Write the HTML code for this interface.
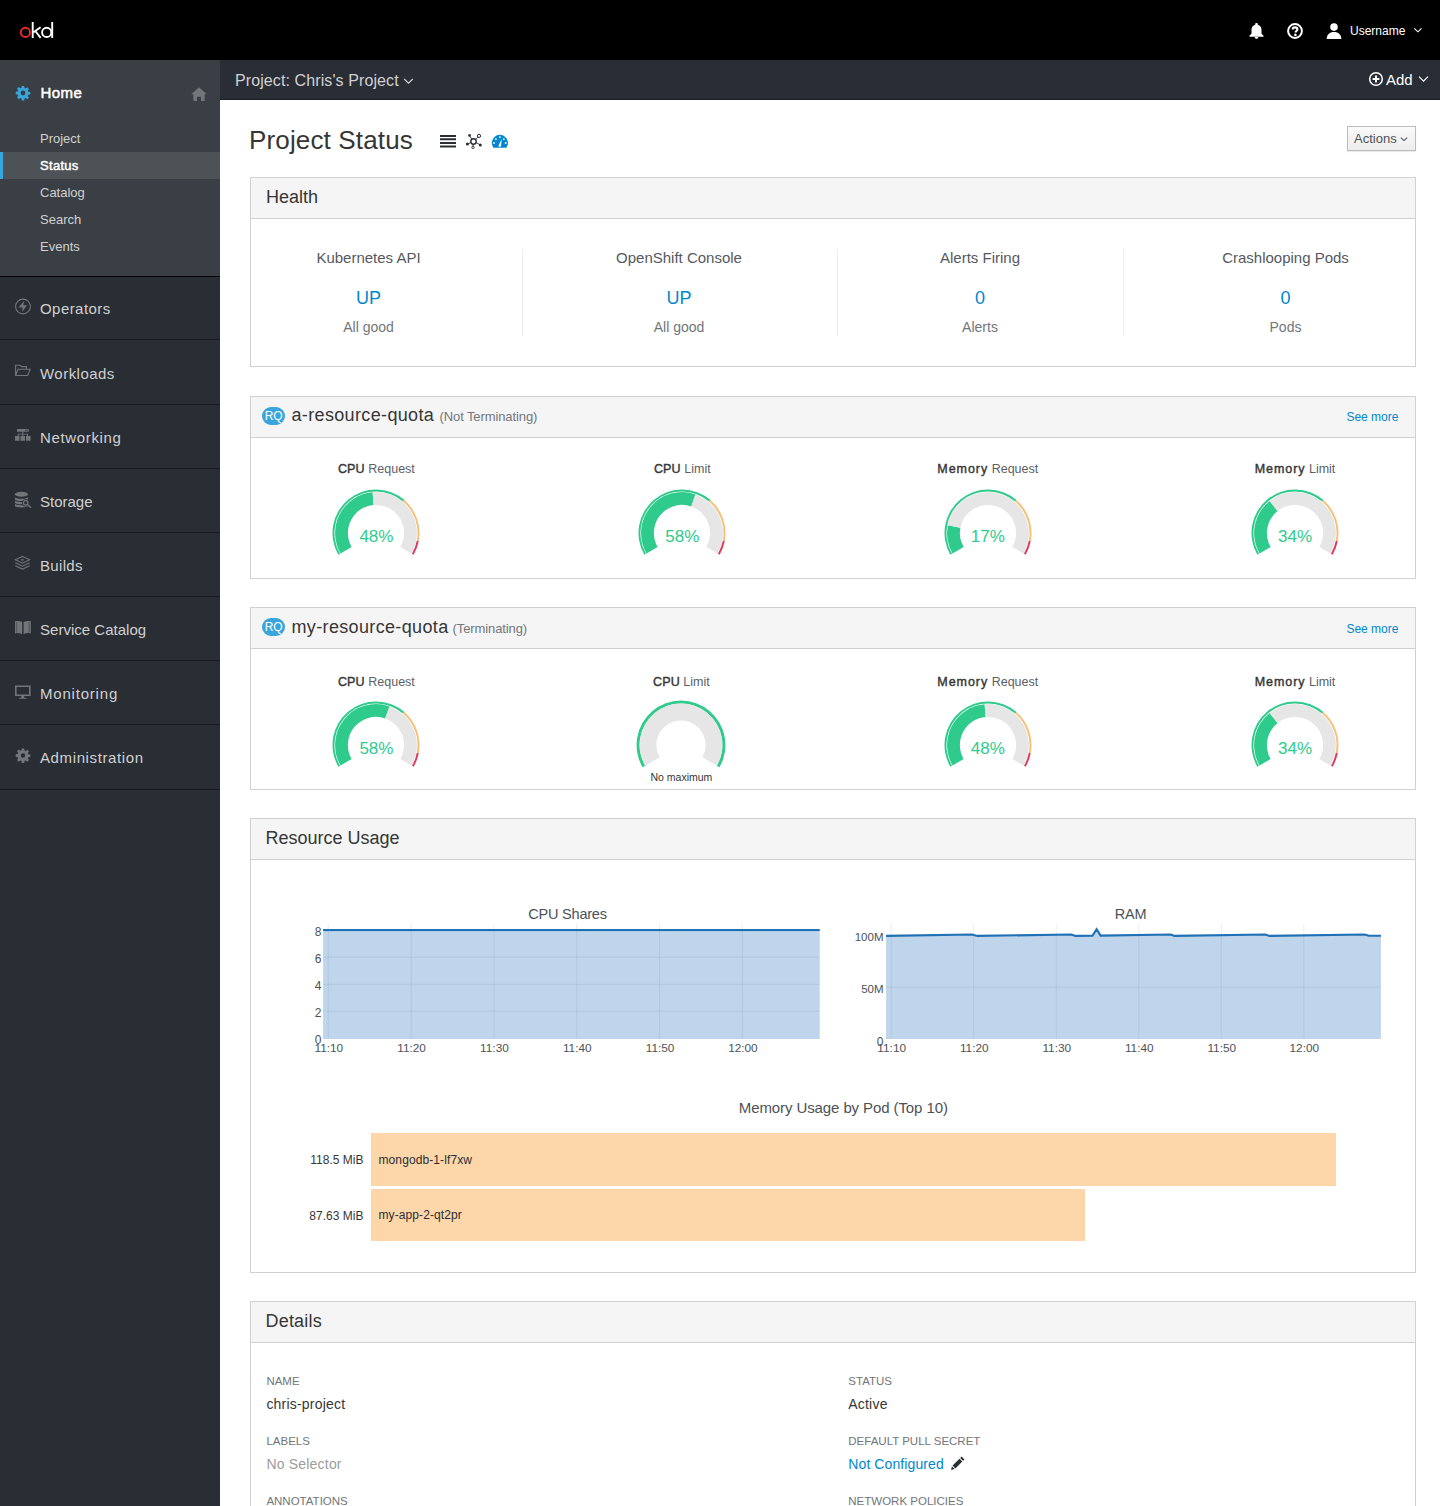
<!DOCTYPE html>
<html><head><meta charset="utf-8">
<style>
*{box-sizing:border-box}
html,body{margin:0;padding:0}
body{width:1440px;height:1506px;overflow:hidden;position:relative;background:#fff;font-family:"Liberation Sans",sans-serif;color:#363636}
.a{position:absolute}
.t{position:absolute;white-space:nowrap;line-height:1}
.c{position:absolute;white-space:nowrap;line-height:1;width:400px;text-align:center}
#mast{left:0;top:0;width:1440px;height:60px;background:#000}
#side{left:0;top:60px;width:220px;height:1446px;background:#292d34}
#homesec{left:0;top:60px;width:220px;height:216px;background:#393f44}
.sep{position:absolute;left:0;width:220px;height:1px;background:#17191d}
.sub{font-size:13px;color:#d1d1d1;left:40px}
.prim{font-size:15px;color:#d1d1d1;left:40px;letter-spacing:.3px}
#pbar{left:220px;top:60px;width:1220px;height:40px;background:#292d35}
.card{position:absolute;left:250px;width:1166px;border:1px solid #d1d1d1;background:#fff}
.card .hd{position:absolute;left:0;top:0;right:0;height:41px;background:#f5f5f5;border-bottom:1px solid #d1d1d1}
.h2{font-size:18px;color:#363636}
.link{color:#0088ce}
.gray{color:#72767b}
</style></head>
<body>
<!-- masthead -->
<div id="mast" class="a"></div>
<svg class="a" style="left:18px;top:20px" width="40" height="22" viewBox="18 20 40 22">
  <circle cx="25.4" cy="32.4" r="4.6" fill="none" stroke="#ee2a2a" stroke-width="1.9"/>
  <path d="M32.7 22v16M40.6 27.2l-7.1 5M35.3 31l5.3 6.8" fill="none" stroke="#fff" stroke-width="1.9"/>
  <circle cx="46.7" cy="32.4" r="4.6" fill="none" stroke="#fff" stroke-width="1.9"/>
  <path d="M52.2 22v16" fill="none" stroke="#fff" stroke-width="1.9"/>
</svg>

<!-- masthead right -->
<svg class="a" style="left:1247px;top:21px" width="20" height="20" viewBox="0 0 20 20">
  <path d="M9.5 2c.8 0 1.3.5 1.3 1.1v.6c2.3.6 3.7 2.6 3.7 5.1v3.2c0 1 .8 1.8 2 2.6v1.1H2.5v-1.1c1.2-.8 2-1.6 2-2.6V8.8c0-2.5 1.4-4.5 3.7-5.1v-.6C8.2 2.5 8.7 2 9.5 2zM7.7 15.9h3.6v.4c0 .9-.8 1.5-1.8 1.5s-1.8-.6-1.8-1.5z" fill="#fff"/>
</svg>
<svg class="a" style="left:1285px;top:21px" width="20" height="20" viewBox="0 0 20 20">
  <circle cx="10" cy="10" r="6.9" fill="none" stroke="#fff" stroke-width="2"/>
  <path d="M7.7 8.5c0-1.3 1-2.1 2.3-2.1s2.4.8 2.4 2c0 1.5-1.9 1.6-1.9 3" fill="none" stroke="#fff" stroke-width="2.1"/>
  <circle cx="10.4" cy="13.9" r="1.3" fill="#fff"/>
</svg>
<svg class="a" style="left:1325px;top:21px" width="18" height="20" viewBox="0 0 18 20">
  <circle cx="9" cy="6.1" r="3.8" fill="#fff"/>
  <path d="M1.6 18c.2-4.2 3-6.9 7.4-6.9s7.2 2.7 7.4 6.9z" fill="#fff"/>
</svg>
<div class="t" style="left:1350px;top:24.5px;font-size:12px;color:#fff">Username</div>
<svg class="a" style="left:1412px;top:26px" width="12" height="9" viewBox="0 0 12 9">
  <path d="M2.3 2.4l3.6 3.4l3.6-3.4" fill="none" stroke="#fff" stroke-width="1.1"/>
</svg>

<!-- sidebar -->
<div id="side" class="a"></div>
<div id="homesec" class="a"></div>
<div class="a" style="left:0;top:152px;width:220px;height:27px;background:#4d5256"></div>
<div class="a" style="left:0;top:152px;width:3px;height:27px;background:#39a5dc"></div>
<svg class="a" style="left:15px;top:85px" width="16" height="16" viewBox="0 0 16 16">
  <path fill="#39a5dc" d="M6.8 1h2.4l.3 2 1.2.5 1.6-1.2 1.7 1.7-1.2 1.6.5 1.2 2 .3v2.4l-2 .3-.5 1.2 1.2 1.6-1.7 1.7-1.6-1.2-1.2.5-.3 2H6.8l-.3-2-1.2-.5-1.6 1.2L2 12.3l1.2-1.6-.5-1.2-2-.3V6.8l2-.3.5-1.2L2 3.7 3.7 2l1.6 1.2 1.2-.5zM8 5.6A2.4 2.4 0 1 0 8 10.4 2.4 2.4 0 1 0 8 5.6z"/>
</svg>
<div class="t" style="left:40.5px;top:84.5px;font-size:15px;color:#fff;-webkit-text-stroke:.5px #fff;letter-spacing:.45px">Home</div>
<svg class="a" style="left:190px;top:86px" width="18" height="16" viewBox="0 0 18 16">
  <path fill="#72767b" d="M9 1.2l7.9 7H14.6V15H11V10.8H7V15H3.4V8.2H1.1z"/>
</svg>
<div class="t sub" style="top:132px">Project</div>
<div class="t sub" style="top:159px;color:#fff;-webkit-text-stroke:.45px #fff;letter-spacing:.3px">Status</div>
<div class="t sub" style="top:186px">Catalog</div>
<div class="t sub" style="top:213px">Search</div>
<div class="t sub" style="top:240px">Events</div>
<div class="sep" style="top:276px;background:#030303"></div>
<div class="sep" style="top:339px"></div>
<div class="sep" style="top:404px"></div>
<div class="sep" style="top:468px"></div>
<div class="sep" style="top:532px"></div>
<div class="sep" style="top:596px"></div>
<div class="sep" style="top:660px"></div>
<div class="sep" style="top:724px"></div>
<div class="sep" style="top:789px"></div>
<div class="t prim" style="top:301px;letter-spacing:0.44px">Operators</div>
<div class="t prim" style="top:366px;letter-spacing:0.47px">Workloads</div>
<div class="t prim" style="top:430px;letter-spacing:0.65px">Networking</div>
<div class="t prim" style="top:494px;letter-spacing:0px">Storage</div>
<div class="t prim" style="top:558px;letter-spacing:0.32px">Builds</div>
<div class="t prim" style="top:622px;letter-spacing:0.02px">Service Catalog</div>
<div class="t prim" style="top:686px;letter-spacing:0.8px">Monitoring</div>
<div class="t prim" style="top:750px;letter-spacing:0.62px">Administration</div>
<!-- sidebar icons -->
<svg class="a" style="left:14px;top:298px" width="18" height="18" viewBox="0 0 18 18">
  <circle cx="9" cy="8.5" r="7.4" fill="none" stroke="#72767b" stroke-width="1.1"/>
  <path fill="#72767b" d="M10.1 3.1L4.4 9.6H8.6L8.2 13.9L13 7.3H9.3z"/>
</svg>
<svg class="a" style="left:14px;top:362px" width="18" height="18" viewBox="0 0 18 18">
  <path fill="none" stroke="#72767b" stroke-width="1.1" d="M1.6 13.5V3.2h4.6l1.2 1.4h5.1v2.2M1.6 13.5l2.4-6.2h12.1l-2.4 6.2z"/>
</svg>
<svg class="a" style="left:14px;top:427px" width="18" height="18" viewBox="0 0 18 18">
  <path fill="#72767b" d="M2.9 2h11.8v2.7H2.9zM8.3 4.7h1v2H14v2.2h-1V7.6H9.3v1.3h-1V7.6H4.6v1.3h-1V6.7h4.7zM1 9h4.5v4.8H1zM6.5 9H11v4.8H6.5zM12 9h4.6v4.8H12z"/>
  <rect x="11.2" y="2.6" width="3" height="1.5" fill="#4a4e55"/>
</svg>
<svg class="a" style="left:14px;top:491px" width="18" height="18" viewBox="0 0 18 18">
  <g fill="#72767b"><ellipse cx="7.45" cy="3.35" rx="6.55" ry="2.5"/><path d="M0.9 6.0A6.55 1.7 0 0 0 14 6.0V8.2A6.55 1.7 0 0 1 0.9 8.2z"/><path d="M0.9 9.3A6.55 1.7 0 0 0 14 9.3V11.5A6.55 1.7 0 0 1 0.9 11.5z"/><path d="M0.9 12.6A6.55 1.7 0 0 0 14 12.6V14.8A6.55 1.7 0 0 1 0.9 14.8z"/></g>
  <circle cx="11.7" cy="11.8" r="3.6" fill="#292d34"/>
  <circle cx="11.7" cy="11.8" r="2.25" fill="none" stroke="#72767b" stroke-width="1.2"/>
  <path d="M13.3 13.5l3.3 2.8" stroke="#72767b" stroke-width="1.5" stroke-linecap="round"/>
</svg>
<svg class="a" style="left:14px;top:555px" width="18" height="18" viewBox="0 0 18 18">
  <path fill="none" stroke="#72767b" stroke-width="1.1" d="M8.5 1.4l7.2 3.4-7.2 3.4-7.2-3.4zM1.3 7.8l7.2 3.4 7.2-3.4M1.3 10.7l7.2 3.4 7.2-3.4"/>
  <path fill="#72767b" d="M7 4.3h3v1.2H7z"/>
</svg>
<svg class="a" style="left:14px;top:619px" width="18" height="18" viewBox="0 0 18 18">
  <path fill="#72767b" d="M1 2.2c2.2-.6 5-.4 7.2.9V15.2C6 14 3.2 13.9 1 14.4zM16.8 2.2c-2.2-.6-5-.4-7.2.9V15.2c2.2-1.2 5-1.3 7.2-.8z"/>
  <path fill="#393f44" d="M2.2 3.2h1v10.3h-1zM14.6 3.2h1v10.3h-1z" opacity=".6"/>
</svg>
<svg class="a" style="left:14px;top:684px" width="18" height="18" viewBox="0 0 18 18">
  <path fill="#72767b" d="M1 1.6h15.6v10.5H1zM2.6 3.1v7.4h12.4V3.1zM7.4 12.1h2.8v1.6h2.2v1.1H5.2v-1.1h2.2z"/>
</svg>
<svg class="a" style="left:14px;top:747px" width="18" height="18" viewBox="0 0 18 18">
  <path fill="#72767b" d="M7.8 1.5h2.4l.3 2 1.2.5 1.6-1.2 1.7 1.7-1.2 1.6.5 1.2 2 .3v2.4l-2 .3-.5 1.2 1.2 1.6-1.7 1.7-1.6-1.2-1.2.5-.3 2H7.8l-.3-2-1.2-.5-1.6 1.2-1.7-1.7 1.2-1.6-.5-1.2-2-.3V7.3l2-.3.5-1.2L3 4.2 4.7 2.5l1.6 1.2 1.2-.5zM9 6.3A2.2 2.2 0 1 0 9 10.7 2.2 2.2 0 1 0 9 6.3z"/>
</svg>

<!-- project bar -->
<div id="pbar" class="a"></div>
<div class="a" style="left:220px;top:99px;width:1220px;height:1px;background:#1c1f26"></div>
<div class="t" style="left:235px;top:73px;font-size:16px;color:#d1d1d1;letter-spacing:.1px">Project: Chris's Project</div>
<svg class="a" style="left:402px;top:76px" width="13" height="10" viewBox="0 0 13 10">
  <path d="M2.2 3l4.3 4.2L10.8 3" fill="none" stroke="#d1d1d1" stroke-width="1.2"/>
</svg>
<svg class="a" style="left:1367px;top:70px" width="18" height="18" viewBox="0 0 18 18">
  <circle cx="9" cy="9" r="6.3" fill="none" stroke="#fff" stroke-width="1.5"/>
  <path d="M9 5.6v6.8M5.6 9h6.8" stroke="#fff" stroke-width="2"/>
</svg>
<div class="t" style="left:1386px;top:72px;font-size:15px;color:#fff">Add</div>
<svg class="a" style="left:1417px;top:74px" width="13" height="10" viewBox="0 0 13 10">
  <path d="M2 2.7l4.5 4.5L11 2.7" fill="none" stroke="#fff" stroke-width="1.2"/>
</svg>


<!-- page title -->
<div class="t" style="left:249px;top:127px;font-size:26px;color:#363636;letter-spacing:.15px">Project Status</div>
<svg class="a" style="left:439px;top:133px" width="18" height="16" viewBox="0 0 18 16">
  <path fill="#292e34" d="M1 1.9h16v2H1zM1 5.3h16v2H1zM1 9h16v2H1zM1 12.4h16v2H1z"/>
</svg>
<svg class="a" style="left:464px;top:132px" width="20" height="18" viewBox="0 0 20 18">
  <g fill="none" stroke="#292e34"><circle cx="9.5" cy="9.5" r="2.7" stroke-width="1.4"/><path d="M5.5 3.4L7.8 7.3M13.9 5.1L11.6 7.6M3.4 12.1l3.5-1.6M16.3 12.9l-4.2-2.3M9.2 12.2L9 14.1" stroke-width=".9"/>
  <circle cx="15" cy="3.9" r="1.6" stroke-width="1"/><circle cx="9" cy="15.3" r="1.2" stroke-width=".9"/></g>
  <circle cx="5.5" cy="3.4" r="1.3" fill="#292e34"/><circle cx="3.4" cy="12.1" r="1.5" fill="#292e34"/><circle cx="16.3" cy="12.9" r="1.5" fill="#292e34"/>
</svg>
<svg class="a" style="left:490px;top:132px" width="20" height="18" viewBox="490 132 20 18">
  <path fill="#0088ce" d="M493.4 147.8A8.1 8.1 0 1 1 506.4 147.8z"/>
  <g fill="#fff"><circle cx="494" cy="143" r=".95"/><circle cx="495.9" cy="139.1" r=".95"/><circle cx="499.9" cy="137.1" r=".95"/><circle cx="503.8" cy="139.1" r=".95"/><circle cx="505.7" cy="143" r=".95"/><path d="M501.7 139l-.6 6.3a1.3 1.3 0 1 1-2.2-.6z"/></g>
</svg>
<div class="a" style="left:1347px;top:126px;width:69px;height:25px;border:1px solid #bbb;background:linear-gradient(#fafafa,#ededed);box-shadow:0 1px 1px rgba(3,3,3,.08)"></div>
<div class="t" style="left:1354px;top:132px;font-size:13px;color:#4d5258">Actions</div>
<svg class="a" style="left:1398.5px;top:135.3px" width="10" height="8" viewBox="0 0 10 8">
  <path d="M1.8 2.6l3.2 3 3.2-3" fill="none" stroke="#4d5258" stroke-width="1.1"/>
</svg>

<!-- Health card -->
<div class="card" style="top:177px;height:190px"><div class="hd"></div></div>
<div class="t h2" style="left:266px;top:187.5px">Health</div>
<div class="a" style="left:522px;top:249px;width:1px;height:87px;background:#ededed"></div>
<div class="a" style="left:837px;top:249px;width:1px;height:87px;background:#ededed"></div>
<div class="a" style="left:1123px;top:249px;width:1px;height:87px;background:#ededed"></div>
<div class="c" style="left:168.5px;top:250px;font-size:15px;color:#55595e">Kubernetes API</div>
<div class="c link" style="left:168.5px;top:288.5px;font-size:18px">UP</div>
<div class="c gray" style="left:168.5px;top:319.5px;font-size:14px">All good</div>
<div class="c" style="left:479px;top:250px;font-size:15px;color:#55595e">OpenShift Console</div>
<div class="c link" style="left:479px;top:288.5px;font-size:18px">UP</div>
<div class="c gray" style="left:479px;top:319.5px;font-size:14px">All good</div>
<div class="c" style="left:780px;top:250px;font-size:15px;color:#55595e">Alerts Firing</div>
<div class="c link" style="left:780px;top:288.5px;font-size:18px">0</div>
<div class="c gray" style="left:780px;top:319.5px;font-size:14px">Alerts</div>
<div class="c" style="left:1085.5px;top:250px;font-size:15px;color:#55595e">Crashlooping Pods</div>
<div class="c link" style="left:1085.5px;top:288.5px;font-size:18px">0</div>
<div class="c gray" style="left:1085.5px;top:319.5px;font-size:14px">Pods</div>


<div class="card" style="top:396px;height:183px"><div class="hd"></div></div>
<div class="a" style="left:262px;top:407px;width:23px;height:18px;border-radius:9px;background:#39a5dc"></div>
<div class="c" style="left:73.50px;top:410.2px;font-size:12px;color:#fff;letter-spacing:-.3px">RQ</div>
<div class="t" style="left:291.5px;top:406.2px;font-size:18px;color:#363636;letter-spacing:.35px">a-resource-quota</div>
<div class="t" style="left:439.5px;top:409.8px;font-size:13px;color:#72767b;letter-spacing:-.1px">(Not Terminating)</div>
<div class="t" style="left:1346.4px;top:410.7px;font-size:12px;color:#0088ce;">See more</div>
<svg class="a" style="left:326.40px;top:482.80px" width="100" height="80" viewBox="0 0 100 80"><path fill="#2fcb8c" d="M12.33 71.75A43.5 43.5 0 0 1 78.42 17.07L77.15 18.55A41.55 41.55 0 0 0 14.02 70.78Z"/><path fill="#f6c177" d="M78.42 17.07A43.5 43.5 0 0 1 92.73 58.15L90.81 57.79A41.55 41.55 0 0 0 77.15 18.55Z"/><path fill="#dd3a5e" d="M92.73 58.15A43.5 43.5 0 0 1 87.67 71.75L85.98 70.77A41.55 41.55 0 0 0 90.81 57.79Z"/><path fill="#2fcb8c" d="M14.58 70.45A40.9 40.9 0 0 1 46.58 9.24L47.65 22.00A28.1 28.1 0 0 0 25.66 64.05Z"/><path fill="#e6e6e6" d="M46.58 9.24A40.9 40.9 0 0 1 85.42 70.45L74.34 64.05A28.1 28.1 0 0 0 47.65 22.00Z"/></svg>
<div class="c" style="left:176.40px;top:463px;font-size:12.5px"><span style="color:#363636;-webkit-text-stroke:.4px #363636;letter-spacing:.15px">CPU</span> <span style="color:#5c6066">Request</span></div>
<div class="c" style="left:176.40px;top:527.80px;font-size:17px;color:#2fcb8c">48%</div>
<svg class="a" style="left:632.30px;top:482.80px" width="100" height="80" viewBox="0 0 100 80"><path fill="#2fcb8c" d="M12.33 71.75A43.5 43.5 0 0 1 78.42 17.07L77.15 18.55A41.55 41.55 0 0 0 14.02 70.78Z"/><path fill="#f6c177" d="M78.42 17.07A43.5 43.5 0 0 1 92.73 58.15L90.81 57.79A41.55 41.55 0 0 0 77.15 18.55Z"/><path fill="#dd3a5e" d="M92.73 58.15A43.5 43.5 0 0 1 87.67 71.75L85.98 70.77A41.55 41.55 0 0 0 90.81 57.79Z"/><path fill="#2fcb8c" d="M14.58 70.45A40.9 40.9 0 0 1 63.45 11.38L59.24 23.46A28.1 28.1 0 0 0 25.66 64.05Z"/><path fill="#e6e6e6" d="M63.45 11.38A40.9 40.9 0 0 1 85.42 70.45L74.34 64.05A28.1 28.1 0 0 0 59.24 23.46Z"/></svg>
<div class="c" style="left:482.30px;top:463px;font-size:12.5px"><span style="color:#363636;-webkit-text-stroke:.4px #363636;letter-spacing:.15px">CPU</span> <span style="color:#5c6066">Limit</span></div>
<div class="c" style="left:482.30px;top:527.80px;font-size:17px;color:#2fcb8c">58%</div>
<svg class="a" style="left:937.80px;top:482.80px" width="100" height="80" viewBox="0 0 100 80"><path fill="#2fcb8c" d="M12.33 71.75A43.5 43.5 0 0 1 78.42 17.07L77.15 18.55A41.55 41.55 0 0 0 14.02 70.78Z"/><path fill="#f6c177" d="M78.42 17.07A43.5 43.5 0 0 1 92.73 58.15L90.81 57.79A41.55 41.55 0 0 0 77.15 18.55Z"/><path fill="#dd3a5e" d="M92.73 58.15A43.5 43.5 0 0 1 87.67 71.75L85.98 70.77A41.55 41.55 0 0 0 90.81 57.79Z"/><path fill="#2fcb8c" d="M14.58 70.45A40.9 40.9 0 0 1 9.82 42.34L22.40 44.73A28.1 28.1 0 0 0 25.66 64.05Z"/><path fill="#e6e6e6" d="M9.82 42.34A40.9 40.9 0 1 1 85.42 70.45L74.34 64.05A28.1 28.1 0 1 0 22.40 44.73Z"/></svg>
<div class="c" style="left:787.80px;top:463px;font-size:12.5px"><span style="color:#363636;-webkit-text-stroke:.4px #363636;letter-spacing:.95px">Memory</span> <span style="color:#5c6066">Request</span></div>
<div class="c" style="left:787.80px;top:527.80px;font-size:17px;color:#2fcb8c">17%</div>
<svg class="a" style="left:1245.00px;top:482.80px" width="100" height="80" viewBox="0 0 100 80"><path fill="#2fcb8c" d="M12.33 71.75A43.5 43.5 0 0 1 78.42 17.07L77.15 18.55A41.55 41.55 0 0 0 14.02 70.78Z"/><path fill="#f6c177" d="M78.42 17.07A43.5 43.5 0 0 1 92.73 58.15L90.81 57.79A41.55 41.55 0 0 0 77.15 18.55Z"/><path fill="#dd3a5e" d="M92.73 58.15A43.5 43.5 0 0 1 87.67 71.75L85.98 70.77A41.55 41.55 0 0 0 90.81 57.79Z"/><path fill="#2fcb8c" d="M14.58 70.45A40.9 40.9 0 0 1 24.60 17.95L32.55 27.98A28.1 28.1 0 0 0 25.66 64.05Z"/><path fill="#e6e6e6" d="M24.60 17.95A40.9 40.9 0 0 1 85.42 70.45L74.34 64.05A28.1 28.1 0 0 0 32.55 27.98Z"/></svg>
<div class="c" style="left:1095.00px;top:463px;font-size:12.5px"><span style="color:#363636;-webkit-text-stroke:.4px #363636;letter-spacing:.95px">Memory</span> <span style="color:#5c6066">Limit</span></div>
<div class="c" style="left:1095.00px;top:527.80px;font-size:17px;color:#2fcb8c">34%</div>
<div class="card" style="top:607px;height:183px"><div class="hd"></div></div>
<div class="a" style="left:262px;top:618px;width:23px;height:18px;border-radius:9px;background:#39a5dc"></div>
<div class="c" style="left:73.50px;top:621.2px;font-size:12px;color:#fff;letter-spacing:-.3px">RQ</div>
<div class="t" style="left:291.5px;top:618.0px;font-size:18px;color:#363636;letter-spacing:.35px">my-resource-quota</div>
<div class="t" style="left:452.5px;top:621.5999999999999px;font-size:13px;color:#72767b;letter-spacing:-.1px">(Terminating)</div>
<div class="t" style="left:1346.4px;top:623.0999999999999px;font-size:12px;color:#0088ce;">See more</div>
<svg class="a" style="left:326.40px;top:694.50px" width="100" height="80" viewBox="0 0 100 80"><path fill="#2fcb8c" d="M12.33 71.75A43.5 43.5 0 0 1 78.42 17.07L77.15 18.55A41.55 41.55 0 0 0 14.02 70.78Z"/><path fill="#f6c177" d="M78.42 17.07A43.5 43.5 0 0 1 92.73 58.15L90.81 57.79A41.55 41.55 0 0 0 77.15 18.55Z"/><path fill="#dd3a5e" d="M92.73 58.15A43.5 43.5 0 0 1 87.67 71.75L85.98 70.77A41.55 41.55 0 0 0 90.81 57.79Z"/><path fill="#2fcb8c" d="M14.58 70.45A40.9 40.9 0 0 1 63.45 11.38L59.24 23.46A28.1 28.1 0 0 0 25.66 64.05Z"/><path fill="#e6e6e6" d="M63.45 11.38A40.9 40.9 0 0 1 85.42 70.45L74.34 64.05A28.1 28.1 0 0 0 59.24 23.46Z"/></svg>
<div class="c" style="left:176.40px;top:675.7px;font-size:12.5px"><span style="color:#363636;-webkit-text-stroke:.4px #363636;letter-spacing:.15px">CPU</span> <span style="color:#5c6066">Request</span></div>
<div class="c" style="left:176.40px;top:739.50px;font-size:17px;color:#2fcb8c">58%</div>
<svg class="a" style="left:631.40px;top:694.50px" width="100" height="80" viewBox="0 0 100 80"><path fill="#2fcb8c" d="M11.55 72.20A44.4 44.4 0 1 1 88.45 72.20L85.85 70.70A41.4 41.4 0 1 0 14.15 70.70Z"/><path fill="#e6e6e6" d="M14.15 70.70A41.4 41.4 0 1 1 85.85 70.70L71.30 62.30A24.6 24.6 0 1 0 28.70 62.30Z"/></svg>
<div class="c" style="left:481.40px;top:675.7px;font-size:12.5px"><span style="color:#363636;-webkit-text-stroke:.4px #363636;letter-spacing:.15px">CPU</span> <span style="color:#5c6066">Limit</span></div>
<div class="c" style="left:481.40px;top:771.70px;font-size:10.5px;color:#363636">No maximum</div>
<svg class="a" style="left:937.80px;top:694.50px" width="100" height="80" viewBox="0 0 100 80"><path fill="#2fcb8c" d="M12.33 71.75A43.5 43.5 0 0 1 78.42 17.07L77.15 18.55A41.55 41.55 0 0 0 14.02 70.78Z"/><path fill="#f6c177" d="M78.42 17.07A43.5 43.5 0 0 1 92.73 58.15L90.81 57.79A41.55 41.55 0 0 0 77.15 18.55Z"/><path fill="#dd3a5e" d="M92.73 58.15A43.5 43.5 0 0 1 87.67 71.75L85.98 70.77A41.55 41.55 0 0 0 90.81 57.79Z"/><path fill="#2fcb8c" d="M14.58 70.45A40.9 40.9 0 0 1 46.58 9.24L47.65 22.00A28.1 28.1 0 0 0 25.66 64.05Z"/><path fill="#e6e6e6" d="M46.58 9.24A40.9 40.9 0 0 1 85.42 70.45L74.34 64.05A28.1 28.1 0 0 0 47.65 22.00Z"/></svg>
<div class="c" style="left:787.80px;top:675.7px;font-size:12.5px"><span style="color:#363636;-webkit-text-stroke:.4px #363636;letter-spacing:.95px">Memory</span> <span style="color:#5c6066">Request</span></div>
<div class="c" style="left:787.80px;top:739.50px;font-size:17px;color:#2fcb8c">48%</div>
<svg class="a" style="left:1245.00px;top:694.50px" width="100" height="80" viewBox="0 0 100 80"><path fill="#2fcb8c" d="M12.33 71.75A43.5 43.5 0 0 1 78.42 17.07L77.15 18.55A41.55 41.55 0 0 0 14.02 70.78Z"/><path fill="#f6c177" d="M78.42 17.07A43.5 43.5 0 0 1 92.73 58.15L90.81 57.79A41.55 41.55 0 0 0 77.15 18.55Z"/><path fill="#dd3a5e" d="M92.73 58.15A43.5 43.5 0 0 1 87.67 71.75L85.98 70.77A41.55 41.55 0 0 0 90.81 57.79Z"/><path fill="#2fcb8c" d="M14.58 70.45A40.9 40.9 0 0 1 24.60 17.95L32.55 27.98A28.1 28.1 0 0 0 25.66 64.05Z"/><path fill="#e6e6e6" d="M24.60 17.95A40.9 40.9 0 0 1 85.42 70.45L74.34 64.05A28.1 28.1 0 0 0 32.55 27.98Z"/></svg>
<div class="c" style="left:1095.00px;top:675.7px;font-size:12.5px"><span style="color:#363636;-webkit-text-stroke:.4px #363636;letter-spacing:.95px">Memory</span> <span style="color:#5c6066">Limit</span></div>
<div class="c" style="left:1095.00px;top:739.50px;font-size:17px;color:#2fcb8c">34%</div>
<div class="card" style="top:818px;height:455px"><div class="hd"></div></div>
<div class="t" style="left:265.5px;top:828.6px;font-size:18px;color:#363636;letter-spacing:0">Resource Usage</div>
<div class="c" style="left:367.50px;top:906.8px;font-size:14.5px;color:#4d5258;letter-spacing:-.2px">CPU Shares</div>
<div class="c" style="left:930.50px;top:906.8px;font-size:14.5px;color:#4d5258;letter-spacing:-.2px">RAM</div>
<svg class="a" style="left:0;top:0" width="1440" height="1100" viewBox="0 0 1440 1100"><rect x="323.1" y="930" width="496.6" height="109" fill="#bfd5eb"/><rect x="327.80" y="924" width="1" height="115" fill="rgba(60,90,130,.10)"/><rect x="410.62" y="924" width="1" height="115" fill="rgba(60,90,130,.10)"/><rect x="493.44" y="924" width="1" height="115" fill="rgba(60,90,130,.10)"/><rect x="576.26" y="924" width="1" height="115" fill="rgba(60,90,130,.10)"/><rect x="659.08" y="924" width="1" height="115" fill="rgba(60,90,130,.10)"/><rect x="741.90" y="924" width="1" height="115" fill="rgba(60,90,130,.10)"/><rect x="323.1" y="1010.8" width="496.6" height="1" fill="rgba(60,90,130,.10)"/><rect x="323.1" y="983.9" width="496.6" height="1" fill="rgba(60,90,130,.10)"/><rect x="323.1" y="956.8" width="496.6" height="1" fill="rgba(60,90,130,.10)"/><rect x="323.1" y="929" width="496.6" height="2.1" fill="#1f70b4"/><polygon points="886.1,935.9 972.0,934.5 977.5,935.9 1071.3,934.5 1075.6,935.9 1092.5,935.8 1096.6,929.2 1100.6,935.6 1170.6,934.5 1174.7,935.9 1265.4,934.5 1269.5,935.9 1364.7,934.5 1368.8,935.7 1380.9,935.8 1380.9,1039 886.1,1039" fill="#bfd5eb"/><rect x="890.70" y="924" width="1" height="115" fill="rgba(60,90,130,.10)"/><rect x="973.22" y="924" width="1" height="115" fill="rgba(60,90,130,.10)"/><rect x="1055.74" y="924" width="1" height="115" fill="rgba(60,90,130,.10)"/><rect x="1138.26" y="924" width="1" height="115" fill="rgba(60,90,130,.10)"/><rect x="1220.78" y="924" width="1" height="115" fill="rgba(60,90,130,.10)"/><rect x="1303.30" y="924" width="1" height="115" fill="rgba(60,90,130,.10)"/><rect x="886.1" y="986.7" width="494.8" height="1" fill="rgba(60,90,130,.10)"/><polyline points="886.1,935.9 972.0,934.5 977.5,935.9 1071.3,934.5 1075.6,935.9 1092.5,935.8 1096.6,929.2 1100.6,935.6 1170.6,934.5 1174.7,935.9 1265.4,934.5 1269.5,935.9 1364.7,934.5 1368.8,935.7 1380.9,935.8" fill="none" stroke="#1f70b4" stroke-width="2.1" stroke-linejoin="miter"/></svg>
<div class="t" style="left:21.50px;width:300px;text-align:right;top:926.0px;font-size:12px;color:#4d5258;">8</div>
<div class="t" style="left:21.50px;width:300px;text-align:right;top:953.1px;font-size:12px;color:#4d5258;">6</div>
<div class="t" style="left:21.50px;width:300px;text-align:right;top:980.2px;font-size:12px;color:#4d5258;">4</div>
<div class="t" style="left:21.50px;width:300px;text-align:right;top:1007.3px;font-size:12px;color:#4d5258;">2</div>
<div class="t" style="left:21.50px;width:300px;text-align:right;top:1034.4px;font-size:12px;color:#4d5258;">0</div>
<div class="c" style="left:128.80px;top:1043.0px;font-size:11.8px;color:#4d5258;">11:10</div>
<div class="c" style="left:691.70px;top:1043.0px;font-size:11.8px;color:#4d5258;">11:10</div>
<div class="c" style="left:211.62px;top:1043.0px;font-size:11.8px;color:#4d5258;">11:20</div>
<div class="c" style="left:774.22px;top:1043.0px;font-size:11.8px;color:#4d5258;">11:20</div>
<div class="c" style="left:294.44px;top:1043.0px;font-size:11.8px;color:#4d5258;">11:30</div>
<div class="c" style="left:856.74px;top:1043.0px;font-size:11.8px;color:#4d5258;">11:30</div>
<div class="c" style="left:377.26px;top:1043.0px;font-size:11.8px;color:#4d5258;">11:40</div>
<div class="c" style="left:939.26px;top:1043.0px;font-size:11.8px;color:#4d5258;">11:40</div>
<div class="c" style="left:460.08px;top:1043.0px;font-size:11.8px;color:#4d5258;">11:50</div>
<div class="c" style="left:1021.78px;top:1043.0px;font-size:11.8px;color:#4d5258;">11:50</div>
<div class="c" style="left:542.90px;top:1043.0px;font-size:11.8px;color:#4d5258;">12:00</div>
<div class="c" style="left:1104.30px;top:1043.0px;font-size:11.8px;color:#4d5258;">12:00</div>
<div class="t" style="left:583.50px;width:300px;text-align:right;top:932.0px;font-size:11.5px;color:#4d5258;">100M</div>
<div class="t" style="left:583.50px;width:300px;text-align:right;top:984.0px;font-size:11.5px;color:#4d5258;">50M</div>
<div class="t" style="left:583.50px;width:300px;text-align:right;top:1035.6px;font-size:12px;color:#4d5258;">0</div>
<div class="c" style="left:643.30px;top:1099.5px;font-size:15px;color:#4d5258;letter-spacing:-.1px">Memory Usage by Pod (Top 10)</div>
<div class="a" style="left:371.1px;top:1133px;width:965.2px;height:52.6px;background:#fdd6a9"></div>
<div class="a" style="left:371.1px;top:1188.8px;width:714px;height:52.6px;background:#fdd6a9"></div>
<div class="t" style="left:63.40px;width:300px;text-align:right;top:1154.3px;font-size:12px;color:#363636;">118.5 MiB</div>
<div class="t" style="left:63.40px;width:300px;text-align:right;top:1209.7px;font-size:12px;color:#363636;">87.63 MiB</div>
<div class="t" style="left:378.5px;top:1154.0px;font-size:12px;color:#292e34;letter-spacing:.1px">mongodb-1-lf7xw</div>
<div class="t" style="left:378.5px;top:1209.4px;font-size:12px;color:#292e34;letter-spacing:.1px">my-app-2-qt2pr</div>
<div class="card" style="top:1301px;height:260px"><div class="hd"></div></div>
<div class="t" style="left:265.5px;top:1311.6px;font-size:18px;color:#363636;letter-spacing:.2px">Details</div>
<div class="t" style="left:266.4px;top:1375.5px;font-size:11.5px;color:#72767b;">NAME</div>
<div class="t" style="left:266.4px;top:1397.4px;font-size:14px;color:#363636;letter-spacing:.2px">chris-project</div>
<div class="t" style="left:266.4px;top:1435.5px;font-size:11.5px;color:#72767b;">LABELS</div>
<div class="t" style="left:266.4px;top:1457.4px;font-size:14px;color:#9c9c9c;letter-spacing:.2px">No Selector</div>
<div class="t" style="left:266.4px;top:1495.5px;font-size:11.5px;color:#72767b;">ANNOTATIONS</div>
<div class="t" style="left:848.3px;top:1375.5px;font-size:11.5px;color:#72767b;">STATUS</div>
<div class="t" style="left:848.3px;top:1397.4px;font-size:14px;color:#363636;letter-spacing:.2px">Active</div>
<div class="t" style="left:848.3px;top:1435.5px;font-size:11.5px;color:#72767b;">DEFAULT PULL SECRET</div>
<div class="t" style="left:848.3px;top:1457.4px;font-size:14px;color:#0088ce;letter-spacing:.1px">Not Configured</div>
<div class="t" style="left:848.3px;top:1495.5px;font-size:11.5px;color:#72767b;">NETWORK POLICIES</div>
<svg class="a" style="left:950px;top:1455px" width="16" height="16" viewBox="0 0 16 16"><path fill="#292e34" d="M11.6 1.6l2.8 2.8-1.4 1.4-2.8-2.8zM9.5 3.7l2.8 2.8-6.9 6.9-2.8-2.8zM1.9 11.3l2.8 2.8-3.6.8z"/></svg>
</body></html>
